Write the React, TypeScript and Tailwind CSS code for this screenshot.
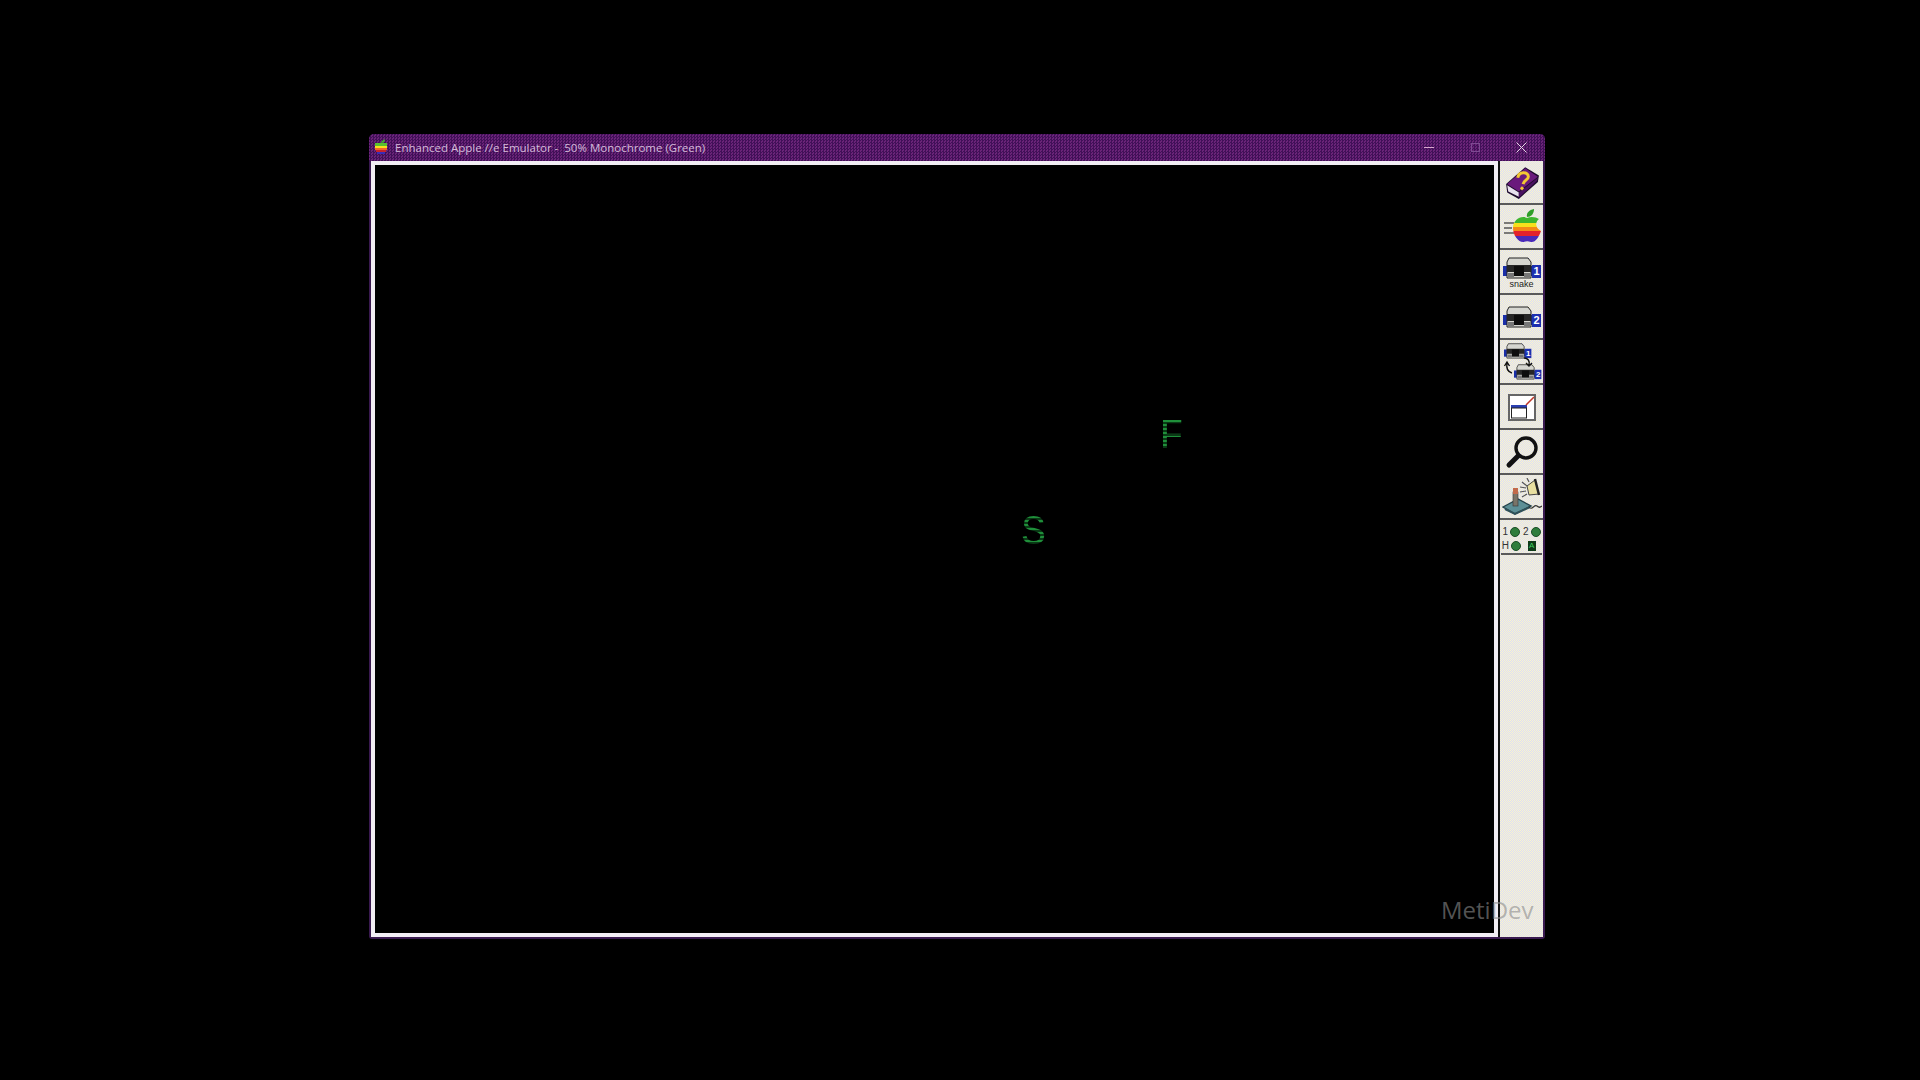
const Book = () => (
  <svg width="36" height="33" viewBox="0 0 34 31">
    <path d="M2 17 L20 1 L33 9 L32 15 L14 31 L3 25 Z" fill="#1c0a2a" />
    <path d="M3 17 L20 2 L32 10 L14 24 Z" fill="#6a1a7c" />
    <path d="M3 18 L14 25 L14 29 L4 24 Z" fill="#e8e0ee" />
    <path d="M14 25 L32 11 L31 14 L14 30 Z" fill="#4a1260" />
    <path d="M13 11 C14 5 23 5 23 10 C23 13 19 13 18 17 M16 20 L18 22" fill="none" stroke="#f2c832" strokeWidth="2.8" />
  </svg>
)

const AppleIcon = () => (
  <svg width="38" height="35" viewBox="0 0 38 35">
    <path d="M1 14 H11 M1 19 H9 M1 24 H11" stroke="#555" strokeWidth="1.6" />
    <defs>
      <clipPath id="apple-shape">
        <path d="M24 9 C28 7 33 8 36 10 C32 13 32 19 38 22 C36 28 32 34 28 33 C25 32 23 32 21 33 C16 34 10 27 10 19 C10 11 18 6 24 9 Z" />
      </clipPath>
    </defs>
    <g clipPath="url(#apple-shape)">
      <rect x="8" y="6" width="30" height="8" fill="#3fb52e" />
      <rect x="8" y="14" width="30" height="4" fill="#f7e01c" />
      <rect x="8" y="18" width="30" height="4" fill="#f58a16" />
      <rect x="8" y="22" width="30" height="5" fill="#e3222c" />
      <rect x="8" y="27" width="30" height="7" fill="#4a2bb8" />
    </g>
    <path d="M24 8 C23 4 26 1 31 0 C31 5 28 8 24 8 Z" fill="#2f9e28" />
  </svg>
)

const DriveBody = ({ n }: { n: string }) => (
  <>
    <rect x="0" y="9" width="33" height="10" fill="#1a2fa8" />
    <path d="M6 1 L25 1 L28 5 L28 21 L4 21 L4 5 Z" fill="#d6d6d0" stroke="#222" strokeWidth="1" />
    <rect x="4" y="8" width="24" height="7" fill="#262626" />
    <rect x="11" y="9" width="10" height="10" fill="#0d0d0d" />
    <rect x="5" y="16" width="6" height="4" fill="#777" />
    <rect x="21" y="16" width="6" height="4" fill="#777" />
    <rect x="29" y="8" width="9" height="13" fill="#1c2fb0" />
    <text x="33.5" y="18" textAnchor="middle" fontSize="11" fontWeight="700" fill="#fff" fontFamily="Liberation Sans, sans-serif">
      {n}
    </text>
  </>
)

const Drive = ({ n }: { n: string }) => (
  <svg width="38" height="22" viewBox="0 0 38 22">
    <DriveBody n={n} />
  </svg>
)

const Swap = () => (
  <svg width="40" height="39" viewBox="0 0 40 39">
    <g transform="translate(2,1) scale(0.72)">
      <DriveBody n="1" />
    </g>
    <g transform="translate(12,22) scale(0.72)">
      <DriveBody n="2" />
    </g>
    <path d="M10 31 C6 30 4 27 5 21 M2.5 24 L5 20 L7.5 24" fill="none" stroke="#111" strokeWidth="1.4" />
    <path d="M22 16 C26 16 28 19 27 23 M24 21 L27 24 L30 21" fill="none" stroke="#111" strokeWidth="1.4" />
  </svg>
)

const Fullscreen = () => (
  <svg width="28" height="28" viewBox="0 0 28 28">
    <rect x="1" y="2" width="26" height="25" fill="#fff" stroke="#666" strokeWidth="2" />
    <rect x="3" y="12" width="16" height="3" fill="#2a3fb0" />
    <rect x="3.5" y="15" width="15" height="10" fill="#fff" stroke="#222" strokeWidth="1" />
    <path d="M18 12 L26 4" stroke="#c0392b" strokeWidth="1.6" />
  </svg>
)

const Magnifier = () => (
  <svg width="34" height="34" viewBox="0 0 34 34">
    <circle cx="21" cy="13" r="10" fill="none" stroke="#111" strokeWidth="3.4" />
    <path d="M13 21 L4 30" stroke="#111" strokeWidth="5" strokeLinecap="round" />
  </svg>
)

const Joystick = () => (
  <svg width="40" height="38" viewBox="0 0 40 38">
    <path d="M1 29 L16 21 L29 28 L13 36 Z" fill="#5d8f96" stroke="#24424a" strokeWidth="1.4" />
    <path d="M3 31 L13 36 L28 29" fill="none" stroke="#2f5058" strokeWidth="2" />
    <rect x="11" y="14" width="5" height="14" fill="#7a7468" stroke="#333" strokeWidth="0.6" />
    <rect x="11" y="10" width="5" height="6" fill="#c26a4a" />
    <path d="M27 29 C30 33 32 26 35 28 C36 29 38 30 40 28" fill="none" stroke="#333" strokeWidth="1.2" />
    <path d="M25 8 L33 2 L37 16 L27 17 Z" fill="#e8dfa0" stroke="#444" strokeWidth="1" />
    <path d="M33 1 L37 17" stroke="#222" strokeWidth="2.4" />
    <path d="M20 4 L25 8 M18 9 L24 10 M18 14 L24 13 M20 19 L25 16 M25 0 L27 4" stroke="#555" strokeWidth="1.2" />
  </svg>
)

const Led = () => <span className="w-[10px] h-[10px] rounded-full bg-[#2f7d3c] border border-[#1b4d26]" />

const buttons = [
  <Book key="book" />,
  <AppleIcon key="apple" />,
  <div key="d1" className="flex flex-col items-center pt-[2px]">
    <Drive n="1" />
    <span className="text-[9px] leading-[10px] text-[#222] font-['Liberation_Sans',sans-serif]">snake</span>
  </div>,
  <Drive key="d2" n="2" />,
  <Swap key="swap" />,
  <Fullscreen key="full" />,
  <Magnifier key="mag" />,
  <Joystick key="joy" />,
]

const App = () => {
  return (
    <div className="w-[1920px] h-[1080px] overflow-hidden bg-black pt-[134px] pl-[369px] font-['Open_Sans',sans-serif]">
      <div className="w-[1176px] h-[805px] rounded-t-[5px] rounded-b-[3px] flex flex-col bg-[#3a1a50] relative">
        {/* title bar */}
        <div className="h-[27px] shrink-0 flex items-center rounded-t-[5px] pl-[5px] bg-[repeating-conic-gradient(#411058_0_25%,#6a2478_0_50%)] bg-[length:3px_3px]">
          <svg width="14" height="15" viewBox="0 0 14 15" className="mb-[3px]">
            <path d="M7 4 C8 1 10 1 11 0 C11 3 9 4 7 4 Z" fill="#3fb52e" />
            <rect x="1" y="4" width="12" height="3" fill="#58c030" />
            <rect x="1" y="7" width="12" height="2" fill="#f7e01c" />
            <rect x="1" y="9" width="12" height="2" fill="#f0662a" />
            <rect x="2" y="11" width="10" height="2" fill="#c5222c" />
            <rect x="3" y="13" width="8" height="2" fill="#3a2bb8" />
          </svg>
          <span className="ml-[7px] text-[11.5px] leading-none text-[#d4bcda] whitespace-pre">Enhanced Apple //e Emulator -  50% Monochrome (Green)</span>
          <div className="ml-auto flex items-center pr-[1px]">
            <div className="w-[46px] flex justify-center"><span className="w-[10px] h-[1px] bg-[#d9a8cf]" /></div>
            <div className="w-[46px] flex justify-center"><span className="w-[9px] h-[9px] border border-[#7d4a92]" /></div>
            <div className="w-[46px] flex justify-center">
              <svg width="11" height="11" viewBox="0 0 11 11"><path d="M0.5 0.5 L10.5 10.5 M10.5 0.5 L0.5 10.5" stroke="#e6d3e6" strokeWidth="1" /></svg>
            </div>
          </div>
        </div>

        {/* client area */}
        <div className="flex-1 flex min-h-0 pl-[2px] pr-[2px] pb-[2px]">
          <div className="relative w-[1127px] border-[4px] border-[#f2eef4] bg-black">
            <span className="absolute left-[784px] top-[251px] text-[42px] leading-[42px] font-['Liberation_Mono',monospace] bg-[repeating-linear-gradient(#1f8f3a_0_2px,#0a3a16_2px_4px)] bg-clip-text text-transparent">F</span>
            <span className="absolute left-[646px] top-[347px] text-[42px] leading-[42px] font-['Liberation_Mono',monospace] bg-[repeating-linear-gradient(#1f8f3a_0_2px,#0a3a16_2px_4px)] bg-clip-text text-transparent">S</span>
          </div>
          <div className="w-[2px] bg-[#111]" />
          <div className="flex-1 flex flex-col bg-[repeating-conic-gradient(#faf6cc_0_25%,#dcdcf6_0_50%)] bg-[length:2px_2px]">
            {buttons.map((b, i) => (
              <div key={i} className={`${i === 0 ? "h-[44px]" : "h-[45px]"} flex items-center justify-center border-b-2 border-[#5a5a5a]`}>
                {b}
              </div>
            ))}
            <div className="h-[30px] mt-[5px] mx-[1px] border-b-2 border-[#5a5a5a] grid grid-cols-2 text-[10px] leading-none text-[#333] font-['Liberation_Sans',sans-serif]">
              <div className="flex items-center justify-center gap-[2px]">1<Led /></div>
              <div className="flex items-center justify-center gap-[2px]">2<Led /></div>
              <div className="flex items-center justify-center gap-[2px]">H<Led /></div>
              <div className="flex items-center justify-center">
                <span className="w-[8px] h-[10px] bg-[#0f3a18] text-[#3fd060] text-[8px] leading-[10px] text-center">A</span>
              </div>
            </div>
          </div>
        </div>

        {/* recording watermark */}
        <span className="absolute left-[1072px] top-[764px] text-[24px] leading-none text-[#8c8c8c]/60">MetiDev</span>
      </div>
    </div>
  )
}

export default App
